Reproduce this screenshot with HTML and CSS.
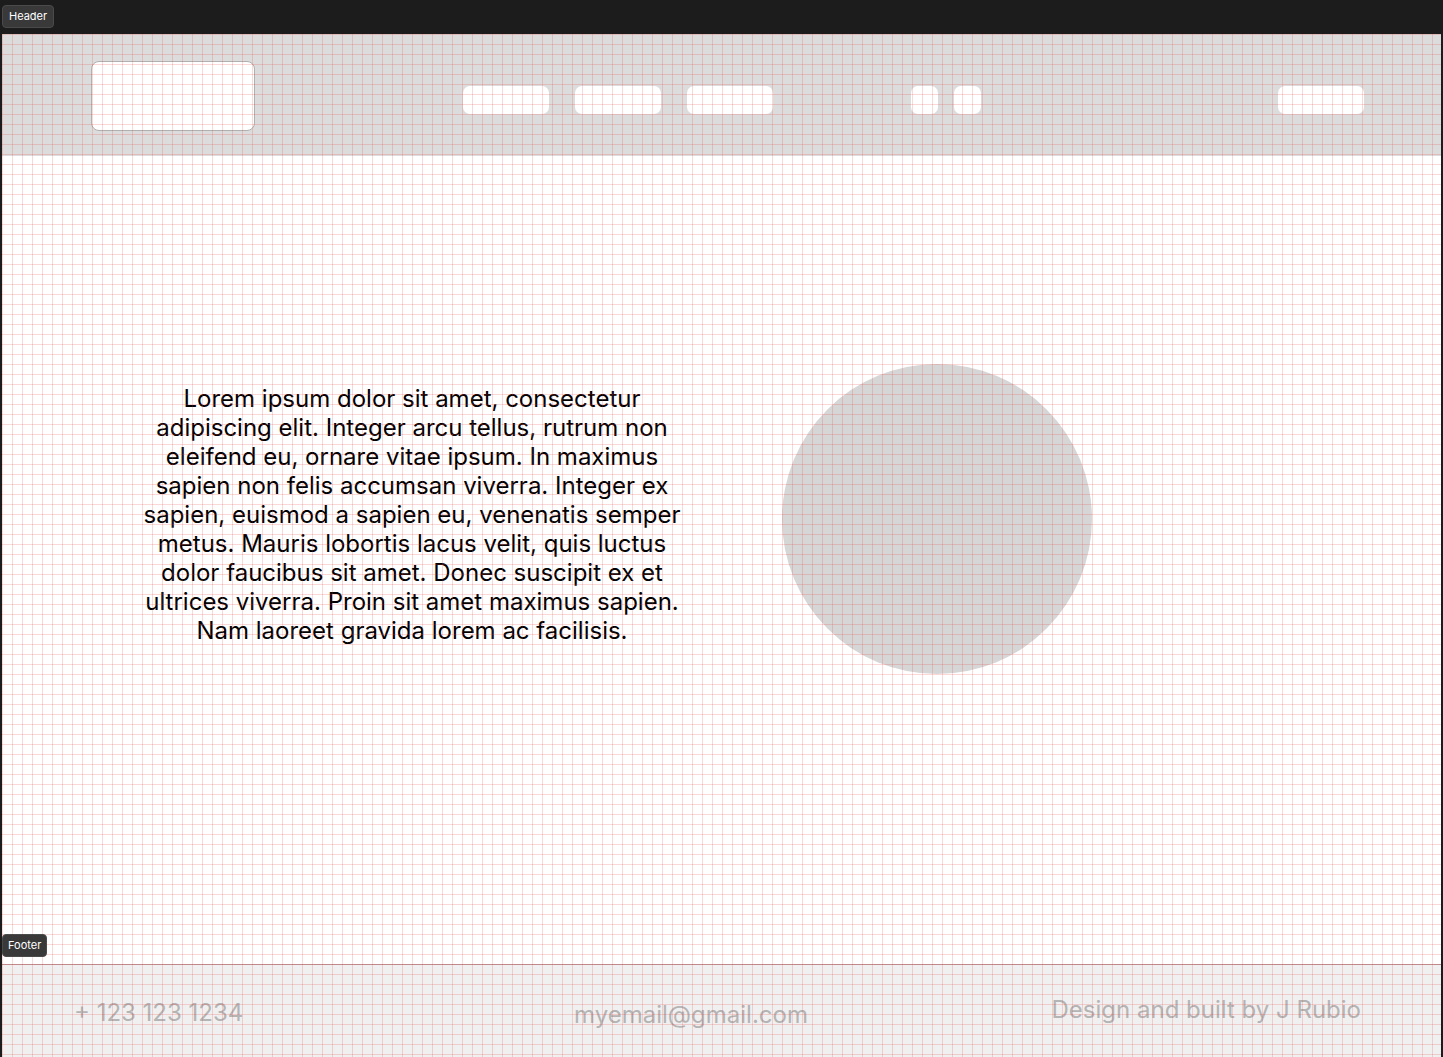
FILE: index.html
```html
<!DOCTYPE html>
<html lang="en">
<head>
<meta charset="utf-8">
<title>Wireframe</title>
<link rel="stylesheet" href="styles.css">
</head>
<body>
  <div class="topbar"><span class="tag">Header</span></div>
  <div class="frame">
    <header class="site-header">
      <div class="logo"></div>
      <nav class="nav">
        <span class="pill"></span>
        <span class="pill"></span>
        <span class="pill"></span>
      </nav>
      <div class="icons">
        <span class="square"></span>
        <span class="square"></span>
      </div>
      <span class="pill cta"></span>
    </header>
    <main class="hero">
      <p class="hero-text">Lorem ipsum dolor sit amet, consectetur adipiscing elit. Integer arcu tellus, rutrum non eleifend eu, ornare vitae ipsum. In maximus sapien non felis accumsan viverra. Integer ex sapien, euismod a sapien eu, venenatis semper metus. Mauris lobortis lacus velit, quis luctus dolor faucibus sit amet. Donec suscipit ex et ultrices viverra. Proin sit amet maximus sapien. Nam laoreet gravida lorem ac facilisis.</p>
      <div class="hero-circle"></div>
    </main>
    <footer class="site-footer">
      <span class="foot-item foot-phone">+ 123 123 1234</span>
      <span class="foot-item foot-email">myemail@gmail.com</span>
      <span class="foot-item foot-credit">Design and built by J Rubio</span>
    </footer>
    <div class="grid-overlay"></div>
    <span class="tag tag-footer">Footer</span>
  </div>
</body>
</html>
```
FILE: styles.css
```css
* { box-sizing: border-box; }

html, body {
  margin: 0;
  padding: 0;
  background: #1c1c1c;
  overflow: hidden;
}

body {
  font-family: Inter, "Noto Sans", sans-serif;
  height: 1057px;
}

.topbar {
  height: 34px;
  padding: 4px 0 0 2px;
}

.tag {
  display: inline-flex;
  align-items: center;
  justify-content: center;
  height: 23px;
  padding: 0 6px;
  background: #393939;
  border: 1px solid #4a4a4a;
  border-radius: 4px;
  color: #ffffff;
  font-size: 11px;
  line-height: 1;
}

.frame {
  position: relative;
  margin: 0 2px;
  height: 1023px;
  background: #ffffff;
  overflow: hidden;
}

.site-header {
  display: flex;
  align-items: flex-start;
  height: 122px;
  padding-left: 89px;
  background: #dcdcdc;
}

.logo {
  width: 164px;
  height: 70px;
  margin-top: 27px;
  background: #ffffff;
  border: 1px solid #b0b0b0;
  border-radius: 8px;
}

.nav {
  display: flex;
  gap: 26px;
  margin-left: 208px;
  margin-top: 52px;
}

.pill {
  display: block;
  width: 86px;
  height: 28px;
  background: #ffffff;
  border-radius: 7px;
}

.icons {
  display: flex;
  gap: 16px;
  margin-left: 138px;
  margin-top: 52px;
}

.square {
  display: block;
  width: 27px;
  height: 28px;
  background: #ffffff;
  border-radius: 7px;
}

.cta {
  margin-left: 297px;
  margin-top: 52px;
}

.hero {
  display: flex;
  align-items: flex-start;
  gap: 100px;
  height: 808px;
  padding: 208px 0 0 140px;
}

.hero-text {
  width: 540px;
  margin: 20px 0 0;
  font-size: 24px;
  line-height: 29px;
  color: #000000;
  text-align: center;
}

.hero-circle {
  flex: none;
  width: 310px;
  height: 310px;
  border-radius: 50%;
  background: #d6d6d6;
}

.site-footer {
  display: grid;
  grid-template-columns: 400px 434px 1fr;
  align-items: start;
  height: 93px;
  padding: 0 80px 0 72px;
  background: #f0f0f0;
  border-top: 1px solid #b89c9c;
  font-size: 24px;
  color: #b4b4b4;
}

.foot-item { white-space: nowrap; }
.foot-phone { padding-top: 33px; }
.foot-email { padding-top: 35px; text-align: center; }
.foot-credit { padding-top: 30px; text-align: right; }

.grid-overlay {
  position: absolute;
  inset: 0;
  pointer-events: none;
  background-image:
    linear-gradient(to right, rgba(230, 60, 60, 0.2) 1px, transparent 1px),
    linear-gradient(to bottom, rgba(230, 60, 60, 0.2) 1px, transparent 1px);
  background-size: 10px 10px;
}

.tag-footer {
  position: absolute;
  left: 0;
  top: 900px;
  padding: 0 5px;
}
```
